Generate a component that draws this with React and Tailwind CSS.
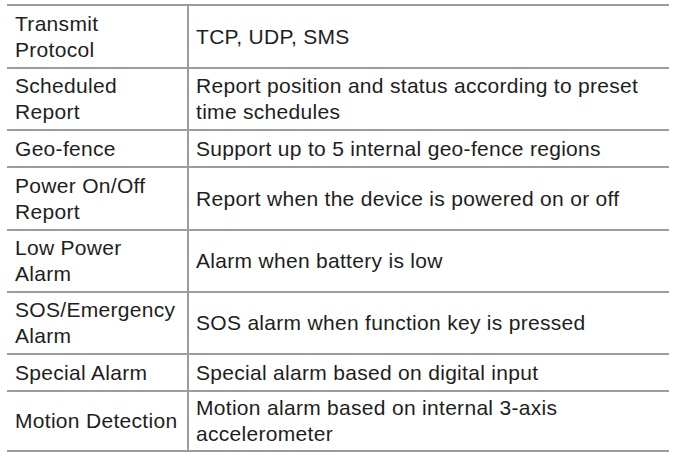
import React from "react";

const rows = [
  { k: ["Transmit", "Protocol"], v: ["TCP, UDP, SMS"], h: "h-[63px]" },
  { k: ["Scheduled", "Report"], v: ["Report position and status according to preset", "time schedules"], h: "h-[62px]" },
  { k: ["Geo-fence"], v: ["Support up to 5 internal geo-fence regions"], h: "h-[37px]" },
  { k: ["Power On/Off", "Report"], v: ["Report when the device is powered on or off"], h: "h-[63px]" },
  { k: ["Low Power", "Alarm"], v: ["Alarm when battery is low"], h: "h-[62px]" },
  { k: ["SOS/Emergency", "Alarm"], v: ["SOS alarm when function key is pressed"], h: "h-[62px]" },
  { k: ["Special Alarm"], v: ["Special alarm based on digital input"], h: "h-[37px]" },
  { k: ["Motion Detection"], v: ["Motion alarm based on internal 3-axis", "accelerometer"], h: "h-[60px]" },
];

export default function App() {
  return (
    <div className="w-[676px] h-[459px] bg-white pt-[4px] pl-[7px] font-['Liberation_Sans',Arial,sans-serif] text-[21px] leading-[26px] tracking-[0.3px] text-[#1e1e1e]">
      <div className="w-[662px] border-t-2 border-[#9c9c9c]">
        {rows.map((r, i) => (
          <div key={i} className={`flex ${r.h} border-b-2 border-[#9c9c9c]`}>
            <div className="w-[182px] shrink-0 flex flex-col justify-center pl-[8px] border-r-2 border-[#9c9c9c]">
              {r.k.map((t) => (
                <div key={t} className="whitespace-nowrap">{t}</div>
              ))}
            </div>
            <div className="flex-1 flex flex-col justify-center pl-[7px]">
              {r.v.map((t) => (
                <div key={t} className="whitespace-nowrap">{t}</div>
              ))}
            </div>
          </div>
        ))}
      </div>
    </div>
  );
}
